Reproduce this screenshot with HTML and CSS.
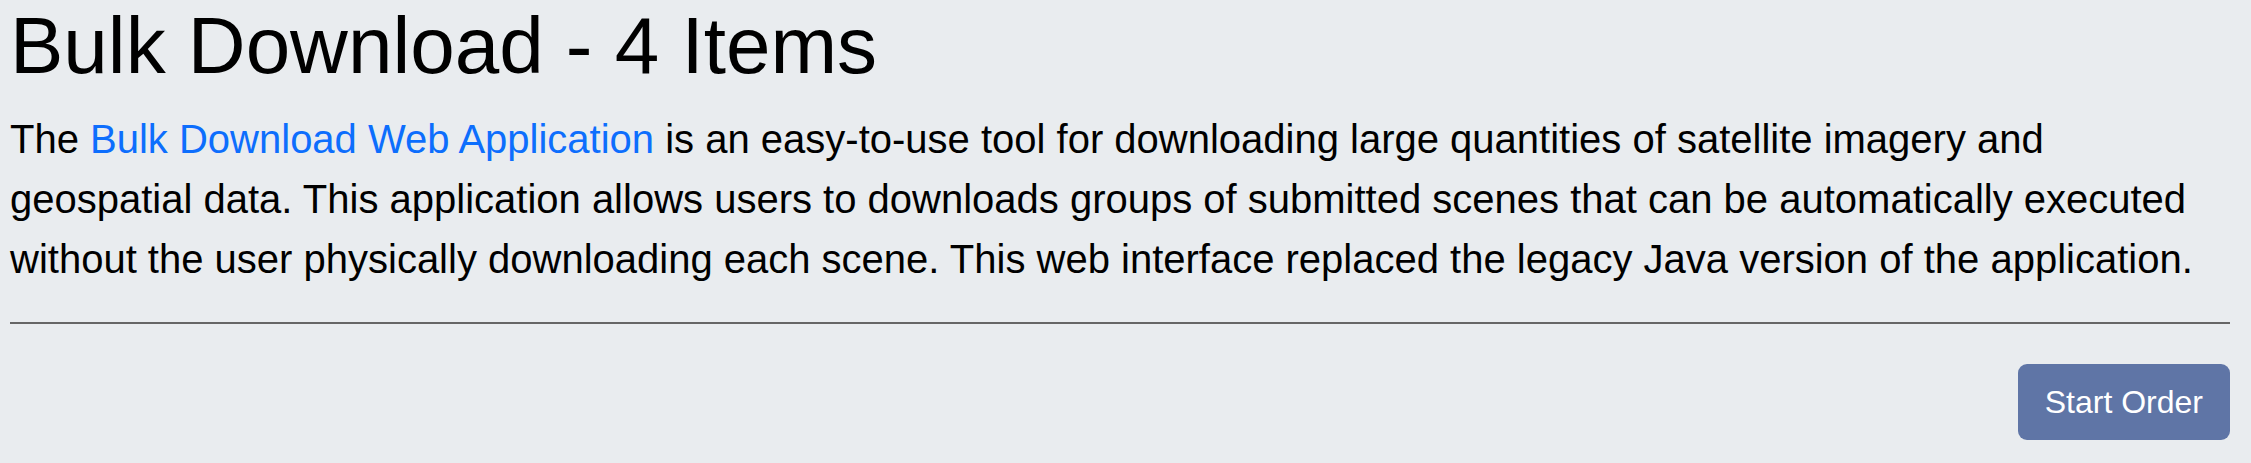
FILE: index.html
```html
<!DOCTYPE html>
<html lang="en">
<head>
<meta charset="utf-8">
<title>Bulk Download - 4 Items</title>
<link rel="stylesheet" href="styles.css">
</head>
<body>
<main class="page">
  <h1 class="title">Bulk Download - 4 Items</h1>
  <p class="intro">The <a class="link" href="#">Bulk Download Web Application</a> is an easy-to-use tool for downloading large quantities of satellite imagery and geospatial data. This application allows users to downloads groups of submitted scenes that can be automatically executed without the user physically downloading each scene. This web interface replaced the legacy Java version of the application.</p>
  <hr class="divider">
  <div class="actions">
    <button class="btn-start" type="button">Start Order</button>
  </div>
</main>
</body>
</html>
```

FILE: styles.css
```css
html, body {
  margin: 0;
  padding: 0;
  background: #e9ecef;
}
body {
  font-family: "Liberation Sans", Arial, sans-serif;
  color: #000;
}
.page {
  padding: 0 21px 0 10px;
  display: flex;
  flex-direction: column;
}
.title {
  margin: 0 0 17px 0;
  font-size: 80px;
  font-weight: 400;
  line-height: 92px;
}
.intro {
  margin: 0;
  font-size: 40px;
  line-height: 60px;
}
.link {
  color: #0d6efd;
  text-decoration: none;
}
.divider {
  margin: 33px 0 0 0;
  border: 0;
  height: 2px;
  background: #666;
}
.actions {
  display: flex;
  justify-content: flex-end;
  padding-top: 40px;
}
.btn-start {
  font-family: "Liberation Sans", Arial, sans-serif;
  font-size: 32px;
  line-height: 48px;
  padding: 14px 27px;
  border: 0;
  border-radius: 9px;
  background: #5f75a6;
  color: #fff;
  cursor: pointer;
}
```
